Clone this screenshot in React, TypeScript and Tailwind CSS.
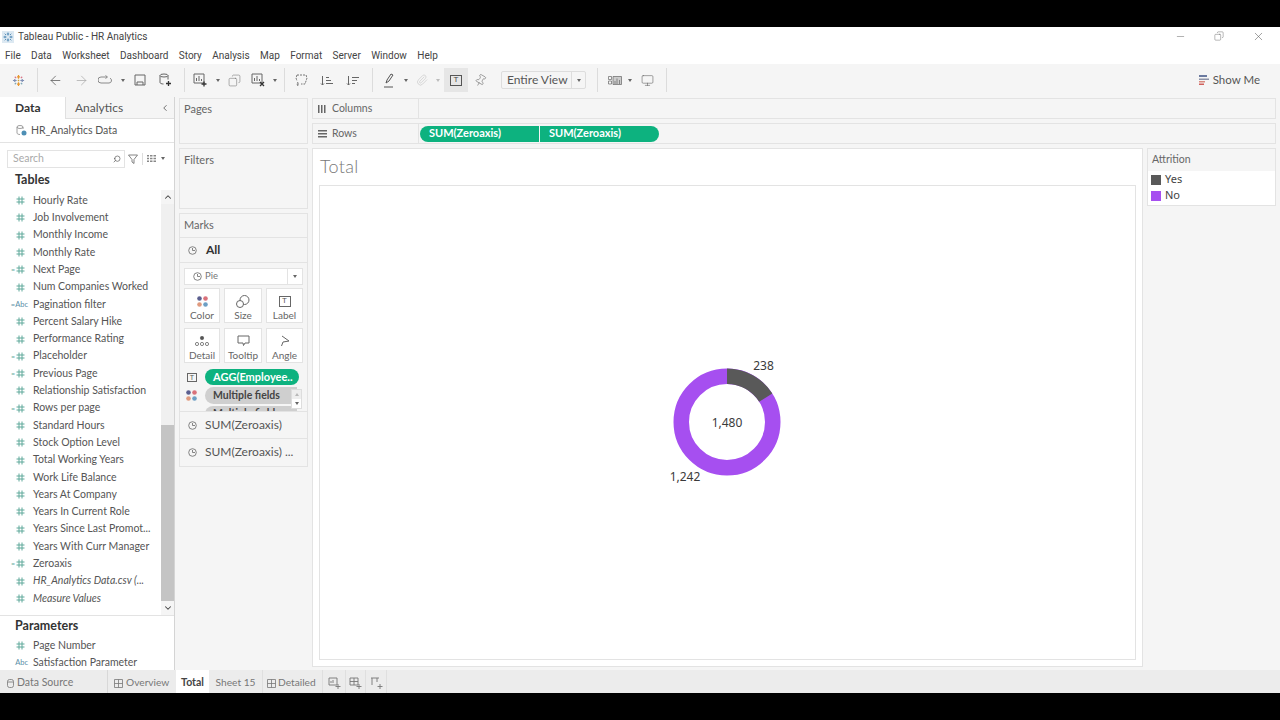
import * as React from "react";
import { ArrowLeft, ArrowRight, ChevronDown, ChevronLeft, ChevronUp, Copy, Minus, Monitor, Paperclip, Pin, Search, X } from "lucide-react";

type Field = { name: string; kind?: "hash" | "calc" | "abc" | "calcAbc"; italic?: boolean };

const FIELDS: Field[] = [
  { name: "Hourly Rate" },
  { name: "Job Involvement" },
  { name: "Monthly Income" },
  { name: "Monthly Rate" },
  { name: "Next Page", kind: "calc" },
  { name: "Num Companies Worked" },
  { name: "Pagination filter", kind: "calcAbc" },
  { name: "Percent Salary Hike" },
  { name: "Performance Rating" },
  { name: "Placeholder", kind: "calc" },
  { name: "Previous Page", kind: "calc" },
  { name: "Relationship Satisfaction" },
  { name: "Rows per page", kind: "calc" },
  { name: "Standard Hours" },
  { name: "Stock Option Level" },
  { name: "Total Working Years" },
  { name: "Work Life Balance" },
  { name: "Years At Company" },
  { name: "Years In Current Role" },
  { name: "Years Since Last Promot..." },
  { name: "Years With Curr Manager" },
  { name: "Zeroaxis", kind: "calc" },
  { name: "HR_Analytics Data.csv (...", italic: true },
  { name: "Measure Values", italic: true },
];

const MENU = ["File", "Data", "Worksheet", "Dashboard", "Story", "Analysis", "Map", "Format", "Server", "Window", "Help"];

function FieldIcon({ kind = "hash" }: { kind?: Field["kind"] }) {
  if (kind === "abc" || kind === "calcAbc") {
    return (
      <span className="flex w-[33px] justify-end pr-[5px] text-[7.5px] leading-none text-[#5b8fa8]">
        {kind === "calcAbc" ? "=Abc" : "Abc"}
      </span>
    );
  }
  return (
    <span className="flex w-[33px] items-center justify-end pr-[8px] text-[#5fa89a]">
      {kind === "calc" && <span className="mr-[1px] text-[7px] leading-none">=</span>}
      <svg width="9" height="9" viewBox="0 0 9 9" fill="none" stroke="currentColor" strokeWidth="1">
        <path d="M3 0.5v8M6 0.5v8M0.5 3h8M0.5 6h8" />
      </svg>
    </span>
  );
}

function FieldRow({ field }: { field: Field }) {
  return (
    <div className="flex h-[17.3px] items-center text-[10.5px] whitespace-nowrap text-[#555]">
      <FieldIcon kind={field.kind} />
      <span className={field.italic ? "italic" : ""}>{field.name}</span>
    </div>
  );
}

function Caret({ className = "" }: { className?: string }) {
  return <span className={"inline-block h-0 w-0 border-x-[2.5px] border-t-[3px] border-x-transparent border-t-[#666] " + className} />;
}

function ToolSep() {
  return <div className="h-[24px] w-px bg-[#dcdcdc]" />;
}

function LogoMark({ size = 14 }: { size?: number }) {
  return (
    <svg width={size} height={size} viewBox="0 0 14 14" fill="none" strokeWidth="1.3">
      <path d="M7 1v4M5.4 3h3.2M7 9v4M5.4 11h3.2" stroke="#e8962d" />
      <path d="M1 7h4M3 5.4v3.2M9 7h4M11 5.4v3.2" stroke="#7f8fb5" />
      <path d="M3 3l1.5 1.5M11 3L9.5 4.5" stroke="#d9768a" />
      <path d="M3 11l1.5-1.5M11 11L9.5 9.5" stroke="#7fa8b8" />
      <path d="M6.2 7h1.6M7 6.2v1.6" stroke="#c9a13c" />
    </svg>
  );
}

function TitleIcon() {
  return (
    <svg width="12" height="12" viewBox="0 0 12 12" fill="none" stroke="#4d87b3" strokeWidth="0.9">
      <rect x="0" y="0" width="12" height="12" fill="#dde9f2" stroke="none" />
      <path d="M6 1.5v3M4.800 3h2.400M6 7.500v3M4.800 9h2.400M1.500 6h3M3 4.800v2.400M7.500 6h3M9 4.800v2.400" />
      <path d="M2.700 2.700l1.300 1.300M9.300 2.700L8 4M2.700 9.300L4 8M9.300 9.300L8 8" />
    </svg>
  );
}

function Toolbar() {
  const ic = "text-[#6e6e6e]";
  return (
    <div className="flex h-[33px] items-center bg-[#f5f5f5] pb-[1px]">
      <div className="flex w-[37px] justify-center"><LogoMark size={13} /></div>
      <ToolSep />
      <div className="flex w-[34px] justify-center"><ArrowLeft size={15} strokeWidth={1.2} className="text-[#555]" /></div>
      <div className="flex w-[18px] justify-center"><ArrowRight size={15} strokeWidth={1.2} className="text-[#aaa]" /></div>
      <div className="flex w-[30px] justify-center">
        <svg width="14" height="10" viewBox="0 0 14 10" fill="none" stroke="#8a8a8a" strokeWidth="1">
          <path d="M9 2H3a2.5 2.5 0 0 0 0 6h8a2.5 2.5 0 0 0 1-4.8M7.5 0.5L9.5 2 7.5 3.5" />
        </svg>
      </div>
      <div className="flex w-[5px] justify-center"><Caret /></div>
      <div className="flex w-[29px] justify-center">
        <svg width="12" height="12" viewBox="0 0 12 12" fill="none" stroke="#666" strokeWidth="1">
          <path d="M1 1h10v10H1zM3 11V8h6v3" />
        </svg>
      </div>
      <div className="flex w-[23px] justify-center">
        <svg width="13" height="14" viewBox="0 0 13 14" fill="none" stroke="#666" strokeWidth="1">
          <ellipse cx="5" cy="2.5" rx="4" ry="1.5" />
          <path d="M1 2.5v7c0 .8 1.5 1.5 3.500 1.500M9 2.500v4" />
          <path d="M9.500 8v5M7 10.500h5" stroke="#333" strokeWidth="1.3" />
        </svg>
      </div>
      <div className="w-[7px]" />
      <ToolSep />
      <div className="flex w-[31px] justify-center">
        <svg width="15" height="14" viewBox="0 0 15 14" fill="none" stroke="#666" strokeWidth="1">
          <path d="M1 1h10v9H1zM3.500 8V5M6 8V3M8.500 8V6" />
          <path d="M11 8.500v5M8.500 11h5" stroke="#333" strokeWidth="1.300" />
        </svg>
      </div>
      <div className="flex w-[3px] justify-center"><Caret /></div>
      <div className="flex w-[31px] justify-center"><Copy size={13} strokeWidth={1} className={ic + " -scale-x-100"} /></div>
      <div className="flex w-[17px] justify-center">
        <svg width="15" height="14" viewBox="0 0 15 14" fill="none" stroke="#666" strokeWidth="1">
          <path d="M1 1h10v9H1zM3.500 8V5M6 8V3M8.500 8V6" />
          <path d="M9 9l4 4M13 9l-4 4" stroke="#333" strokeWidth="1.300" />
        </svg>
      </div>
      <div className="flex w-[16px] justify-center"><Caret /></div>
      <div className="w-[1px]" />
      <ToolSep />
      <div className="flex w-[33px] justify-center">
        <svg width="13" height="14" viewBox="0 0 13 14" fill="none" stroke="#777" strokeWidth="1">
          <path d="M2 2h9l1 3-1 3-1 3H6M2 2L1 5l1 3M4 11l-2 0M3 13l-1-2 1-2" strokeDasharray="2 1" />
        </svg>
      </div>
      <div className="flex w-[18px] justify-center">
        <svg width="14" height="13" viewBox="0 0 14 13" fill="none" stroke="#666" strokeWidth="1">
          <path d="M2.500 2v9M1 9.500l1.500 1.500L4 9.500M6 3.500h3M6 6.500h5M6 9.500h7" />
        </svg>
      </div>
      <div className="flex w-[34px] justify-center">
        <svg width="14" height="13" viewBox="0 0 14 13" fill="none" stroke="#666" strokeWidth="1">
          <path d="M2.500 2v9M1 9.500l1.500 1.500L4 9.500M6 3.500h7M6 6.500h5M6 9.500h3" />
        </svg>
      </div>
      <div className="w-[2px]" />
      <ToolSep />
      <div className="flex w-[32px] justify-center">
        <svg width="12" height="15" viewBox="0 0 12 15" fill="none" stroke="#555" strokeWidth="1">
          <path d="M3 10l1-3 4-6 2 1-4 6-3 2zM1 14h9" />
        </svg>
      </div>
      <div className="flex w-[2px] justify-center"><Caret /></div>
      <div className="flex w-[30px] justify-center"><Paperclip size={12} strokeWidth={1} className="text-[#bbb]" /></div>
      <div className="flex w-[1px] justify-center"><Caret className="opacity-40" /></div>
      <div className="ml-[6px] flex h-[24px] w-[24px] items-center justify-center bg-[#e6e6e6]">
        <span className="flex h-[11px] w-[12px] items-center justify-center border border-[#555] font-['Liberation_Sans'] text-[8px] leading-none text-[#444]">T</span>
      </div>
      <div className="flex w-[24px] justify-center"><Pin size={13} strokeWidth={1} className="rotate-[30deg] text-[#666]" /></div>
      <div className="ml-[9px] flex h-[18px] w-[85px] items-center rounded-[2px] border border-[#ddd] text-[12px] text-[#555]">
        <span className="w-[69px] pl-[5px] leading-none whitespace-nowrap">Entire View</span>
        <span className="flex h-full flex-1 items-center justify-center border-l border-[#ddd]"><Caret /></span>
      </div>
      <div className="w-[11px]" />
      <ToolSep />
      <div className="ml-[2px] flex w-[30px] justify-center">
        <svg width="14" height="9" viewBox="0 0 14 9" fill="#888" stroke="#666" strokeWidth="0.700">
          <path d="M.5.500h3v3h-3zM.5 5h3v3h-3z" fill="none" />
          <path d="M5 .5h8.500v8H5z" fill="#ccc" />
          <path d="M7 8V5M9 8V2.500M11.500 8V4" />
        </svg>
      </div>
      <div className="flex w-0 justify-center"><Caret className="shrink-0" /></div>
      <div className="flex w-[34px] justify-center"><Monitor size={13} strokeWidth={1} className="text-[#555]" /></div>
      <div className="w-[2px]" />
      <ToolSep />
      <div className="ml-auto flex items-center pr-[20px]">
        <svg width="10" height="10" viewBox="0 0 10 10" className="mr-[4px]">
          <path d="M0 0h8v2H0z" fill="#6b7aa0" />
          <path d="M0 3.500h10v1.500H0z" fill="#8d93a8" />
          <path d="M0 6h6v1.500H0z" fill="#d98a7e" />
          <path d="M0 8.500h5V10H0z" fill="#d0605c" />
        </svg>
        <span className="text-[11.5px] leading-none text-[#555]">Show Me</span>
      </div>
    </div>
  );
}

function DataPane() {
  return (
    <div className="flex w-[175px] shrink-0 flex-col border-r border-[#d4d4d4] bg-white">
      <div className="flex h-[22px] shrink-0">
        <div className="flex w-[65px] items-center bg-white pl-[15px] text-[12px] font-bold text-[#333]">Data</div>
        <div className="flex flex-1 items-center justify-between border-b border-l border-[#e0e0e0] bg-[#f5f5f5] pr-[4px] pl-[9px] text-[12px] text-[#555]">
          Analytics
          <ChevronLeft size={10} className="text-[#555]" />
        </div>
      </div>
      <div className="flex h-[24px] shrink-0 items-center border-b border-[#e3e3e3] pl-[16px] text-[10.5px] text-[#555]">
        <svg width="11" height="11" viewBox="0 0 11 11" fill="none" stroke="#888" strokeWidth="0.800" className="mr-[4px]">
          <ellipse cx="4" cy="2" rx="3" ry="1.500" />
          <path d="M1 2v6c0 .8 1.300 1.500 3 1.500M7 2v2" />
          <circle cx="8" cy="8" r="2.500" fill="#4e8fb5" stroke="none" />
        </svg>
        HR_Analytics Data
      </div>
      <div className="flex h-[31px] shrink-0 items-center pl-[7px]">
        <div className="flex h-[18px] w-[118px] items-center justify-between border border-[#e3e3e3] pr-[3px] pl-[5px] text-[10.500px] text-[#aaa]">
          Search
          <Search size={8} className="-scale-x-100 text-[#555]" />
        </div>
        <svg width="10" height="10" viewBox="0 0 10 10" fill="none" stroke="#666" strokeWidth="0.800" className="ml-[3px]">
          <path d="M.5 1h9L6 5.500V9.500L4 8V5.500z" />
        </svg>
        <div className="mx-[4px] h-[12px] w-px bg-[#ddd]" />
        <svg width="9" height="7" viewBox="0 0 9 7" fill="#888"><path d="M0 0h2v1.500H0zM3 0h2.500v1.500H3zM6.500 0H9v1.500H6.500zM0 2.700h2v1.500H0zM3 2.700h2.500v1.500H3zM6.500 2.700H9v1.500H6.500zM0 5.400h2V7H0zM3 5.400h2.500V7H3zM6.500 5.400H9V7H6.500z" /></svg>
        <Caret className="ml-[5px]" />
      </div>
      <div className="flex h-[13px] shrink-0 items-center pl-[15px] text-[12.5px] font-bold text-[#333]">Tables</div>
      <div className="mt-[3px] flex h-[425px] shrink-0">
        <div className="flex-1 overflow-hidden pt-[2px]">
          {FIELDS.map((f) => <FieldRow key={f.name} field={f} />)}
        </div>
        <div className="flex w-[13px] flex-col bg-[#f0f0f0]">
          <div className="flex h-[14px] items-center justify-center bg-[#f5f5f5]"><ChevronUp size={10} strokeWidth={2.500} className="text-[#444]" /></div>
          <div className="mt-[221px] w-full flex-1 bg-[#c4c4c4]" />
          <div className="flex h-[14px] items-center justify-center bg-[#f5f5f5]"><ChevronDown size={10} strokeWidth={2.500} className="text-[#444]" /></div>
        </div>
      </div>
      <div className="flex-1 border-t border-[#e3e3e3]">
        <div className="flex h-[20px] items-center pl-[15px] text-[12.5px] leading-none font-bold text-[#333]">Parameters</div>
        <div className="mt-[1px]">
          <FieldRow field={{ name: "Page Number" }} />
          <FieldRow field={{ name: "Satisfaction Parameter", kind: "abc" }} />
        </div>
      </div>
    </div>
  );
}

function Card({ title, className = "" }: { title: string; className?: string }) {
  return (
    <div className={"border border-[#e3e3e3] bg-[#f5f5f5] " + className}>
      <div className="pl-[4px] text-[11px] text-[#666]">{title}</div>
    </div>
  );
}

function MarkButton({ label, width, icon }: { label: string; width: string; icon: React.ReactNode }) {
  return (
    <div className={"flex h-[35px] flex-col items-center border border-[#e3e3e3] bg-white pt-[4px] " + width}>
      <div className="flex h-[16px] items-center">{icon}</div>
      <span className="text-[10px] leading-[13px] text-[#666]">{label}</span>
    </div>
  );
}

function PieGlyph() {
  return (
    <svg width="9" height="9" viewBox="0 0 9 9" fill="none" stroke="#777" strokeWidth="0.900" className="shrink-0">
      <circle cx="4.500" cy="4.500" r="3.800" />
      <path d="M4.500 2v2.500H7" />
    </svg>
  );
}

function ColorDots() {
  return (
    <svg width="11" height="11" viewBox="0 0 11 11" className="shrink-0">
      <circle cx="2.500" cy="2.500" r="2.300" fill="#5b5f8f" />
      <circle cx="8.500" cy="2.500" r="2.300" fill="#d9717a" />
      <circle cx="2.500" cy="8.500" r="2.300" fill="#e09a7e" />
      <circle cx="8.500" cy="8.500" r="2.300" fill="#6d9fc4" />
    </svg>
  );
}

function MarksCard() {
  const s = { fill: "none", stroke: "#666", strokeWidth: 1 };
  return (
    <div className="h-[254px] border border-[#e3e3e3] bg-[#f5f5f5]">
      <div className="flex h-[23px] items-center pl-[4px] text-[11px] text-[#666]">Marks</div>
      <div className="flex h-[26px] items-center border-y border-[#e3e3e3] pl-[8px]">
        <PieGlyph />
        <span className="ml-[9px] text-[12px] font-bold text-[#333]">All</span>
      </div>
      <div className="mx-[4px] mt-[5px] flex h-[17px] items-center border border-[#e3e3e3] bg-white pl-[8px] text-[9.500px] text-[#777]">
        <PieGlyph />
        <span className="ml-[3px] flex-1">Pie</span>
        <span className="flex h-full w-[15px] items-center justify-center border-l border-[#e3e3e3]"><Caret /></span>
      </div>
      <div className="mx-[4px] mt-[3px] flex justify-between">
        <MarkButton label="Color" width="w-[36px]" icon={<ColorDots />} />
        <MarkButton label="Size" width="w-[38px]" icon={
          <svg width="14" height="13" viewBox="0 0 14 13" {...s}><circle cx="8.500" cy="5" r="4.500" /><circle cx="4" cy="9" r="3.500" fill="#fff" /></svg>
        } />
        <MarkButton label="Label" width="w-[37px]" icon={
          <span className="flex h-[11px] w-[12px] items-center justify-center border border-[#666] font-['Liberation_Sans'] text-[8px] leading-none text-[#555]">T</span>
        } />
      </div>
      <div className="mx-[4px] mt-[5px] flex justify-between">
        <MarkButton label="Detail" width="w-[36px]" icon={
          <svg width="14" height="11" viewBox="0 0 14 11" fill="none" stroke="#666" strokeWidth="0.800">
            <circle cx="7" cy="2" r="1.700" fill="#555" /><circle cx="2" cy="8" r="1.600" /><circle cx="7" cy="8" r="1.600" /><circle cx="12" cy="8" r="1.600" />
          </svg>
        } />
        <MarkButton label="Tooltip" width="w-[38px]" icon={
          <svg width="13" height="12" viewBox="0 0 13 12" {...s}><path d="M1 1h11v7H8L6.500 10.500 6 8H1z" /></svg>
        } />
        <MarkButton label="Angle" width="w-[37px]" icon={
          <svg width="10" height="12" viewBox="0 0 10 12" {...s}><path d="M2 1l7 5-6 1-1.500 4" /></svg>
        } />
      </div>
      <div className="relative mt-[5px] h-[43px] overflow-hidden bg-[#f5f5f5]">
        <div className="flex h-[18px] items-center pl-[7px]">
          <span className="flex h-[9px] w-[10px] items-center justify-center border border-[#666] font-['Liberation_Sans'] text-[7px] leading-none text-[#555]">T</span>
          <span className="ml-[8px] flex h-[16px] w-[94px] items-center rounded-full bg-[#0db27f] pl-[8px] text-[11px] font-bold whitespace-nowrap text-white">AGG(Employee..</span>
        </div>
        <div className="flex h-[19px] items-center pl-[6px]">
          <ColorDots />
          <span className="ml-[8px] flex h-[17px] w-[92px] items-center rounded-l-full bg-[#cfcfcf] pl-[8px] text-[10.5px] font-bold whitespace-nowrap text-[#444]">Multiple fields</span>
        </div>
        <div className="flex h-[18px] items-center pl-[25px]">
          <span className="flex h-[16px] w-[92px] items-center rounded-l-full bg-[#cfcfcf] pl-[8px] text-[10.5px] font-bold whitespace-nowrap text-[#444]">Multiple fields</span>
        </div>
        <div className="absolute top-[21px] right-[5px] flex h-[20px] w-[11px] flex-col border border-[#ddd] bg-[#eee]">
          <div className="flex flex-1 items-center justify-center"><Caret className="rotate-180 opacity-40" /></div>
          <div className="flex flex-1 items-center justify-center bg-white"><Caret className="border-t-[#222]" /></div>
        </div>
      </div>
      {["SUM(Zeroaxis)", "SUM(Zeroaxis) ..."].map((t) => (
        <div key={t} className="flex h-[27px] items-center border-t border-[#e3e3e3] pl-[8px] text-[12px] whitespace-nowrap text-[#555]">
          <PieGlyph />
          <span className="ml-[8px]">{t}</span>
        </div>
      ))}
    </div>
  );
}

function Shelf({ label, icon, children }: { label: string; icon: React.ReactNode; children?: React.ReactNode }) {
  return (
    <div className="flex h-[21px] border border-[#e3e3e3] bg-[#f5f5f5]">
      <div className="flex w-[106px] items-center border-r border-[#e3e3e3] pl-[5px] text-[10.5px] text-[#666]">
        <span className="w-[14px]">{icon}</span>
        {label}
      </div>
      {children}
    </div>
  );
}

function ShelfPill() {
  return <span className="flex h-[16px] items-center bg-[#0db27f] pl-[9px] text-[11px] font-bold text-white">SUM(Zeroaxis)</span>;
}

function Donut() {
  // 238 of 1,480 from 12 o'clock, clockwise
  const a = (238 / 1480) * 2 * Math.PI;
  const r = 45.75;
  const cx = 100;
  const cy = 100;
  const ex = cx + r * Math.sin(a);
  const ey = cy - r * Math.cos(a);
  const font = { fontFamily: "'Noto Sans', sans-serif", fontSize: 12, fill: "#3a3a3a" };
  return (
    <svg width="200" height="200" viewBox="0 0 200 200">
      <circle cx={cx} cy={cy} r={r} fill="none" stroke="#a64ff0" strokeWidth="15.500" />
      <path d={`M${cx} ${cy - r}A${r} ${r} 0 0 1 ${ex} ${ey}`} fill="none" stroke="#595959" strokeWidth="15.500" />
      <text x={cx} y={cy + 4.5} textAnchor="middle" {...font}>1,480</text>
      <text x={136.500} y={47.500} textAnchor="middle" {...font}>238</text>
      <text x={58} y={159} textAnchor="middle" {...font}>1,242</text>
    </svg>
  );
}

function App() {
  return (
    <div className="flex h-[720px] w-[1280px] flex-col overflow-hidden bg-black py-[27px] font-['Lato',sans-serif]">
      <div className="flex h-[18px] shrink-0 items-center bg-white pt-[1px] font-['Roboto',sans-serif] text-[10px] text-[#444]">
        <div className="flex w-[18px] justify-center pr-[2px]"><TitleIcon /></div>
        <span>Tableau Public - HR Analytics</span>
        <div className="ml-auto flex items-center pb-[1px] text-[#555]">
          <Minus size={11} strokeWidth={1} className="mr-[28px]" />
          <Copy size={10} strokeWidth={1} className="mr-[28px] -scale-x-100" />
          <X size={13} strokeWidth={1} className="mr-[15px]" />
        </div>
      </div>
      <div className="flex h-[19px] shrink-0 items-center gap-[10.4px] bg-white pt-[2px] pl-[5px] font-['Roboto',sans-serif] text-[10px] text-[#444]">
        {MENU.map((m) => <span key={m}>{m}</span>)}
      </div>
      <Toolbar />
      <div className="flex min-h-0 flex-1 bg-[#f5f5f5]">
        <DataPane />
        <div className="flex w-[133px] shrink-0 flex-col gap-[4px] pt-[1px] pl-[4px]">
          <Card title="Pages" className="h-[46px] pt-[2px]" />
          <Card title="Filters" className="h-[61px] pt-[3px]" />
          <MarksCard />
        </div>
        <div className="flex min-w-0 flex-1 flex-col pt-[1px] pr-[4px] pl-[4px]">
          <div className="flex flex-col gap-[4px]">
            <Shelf label="Columns" icon={
              <svg width="8" height="8" viewBox="0 0 8 8" fill="#666"><path d="M0 0h1.500v8H0zM3 0h1.500v8H3zM6 0h1.500v8H6z" /></svg>
            } />
            <Shelf label="Rows" icon={
              <svg width="9" height="8" viewBox="0 0 9 8" fill="#666"><path d="M0 0h9v1.500H0zM0 3h9v1.500H0zM0 6h9v1.500H0z" /></svg>
            }>
              <div className="flex items-center gap-px pl-[1px]">
                <div className="overflow-hidden rounded-l-full"><div className="w-[119px]"><ShelfPill /></div></div>
                <div className="overflow-hidden rounded-r-full"><div className="w-[119px] bg-[#0db27f]"><ShelfPill /></div></div>
              </div>
            </Shelf>
          </div>
          <div className="mt-[4px] flex min-h-0 flex-1 gap-[4px] pb-[3px]">
            <div className="flex w-[831px] shrink-0 flex-col border border-[#e3e3e3] bg-white px-[6px] pb-[6px]">
              <div className="flex h-[36px] shrink-0 items-center pb-[2px] pl-[1px] text-[18px] font-light tracking-[0.3px] text-[#777]">Total</div>
              <div className="flex min-h-0 flex-1 items-center justify-center border border-[#e3e3e3] pr-[1px] pb-[1px]">
                <Donut />
              </div>
            </div>
            <div className="h-[58px] flex-1 border border-[#e3e3e3] bg-white">
              <div className="flex h-[22px] items-center bg-[#f5f5f5] pl-[4px] text-[10.5px] text-[#666]">Attrition</div>
              <div className="flex h-[16px] items-center pt-[1px] pl-[3px] font-['Noto_Sans',sans-serif] text-[11px] text-[#444]">
                <span className="mr-[4px] h-[10px] w-[10px] bg-[#595959]" />Yes
              </div>
              <div className="flex h-[16px] items-center pt-[1px] pl-[3px] font-['Noto_Sans',sans-serif] text-[11px] text-[#444]">
                <span className="mr-[4px] h-[10px] w-[10px] bg-[#a64ff0]" />No
              </div>
            </div>
          </div>
        </div>
      </div>
      <div className="flex h-[23px] shrink-0 items-stretch bg-[#ececec] text-[10.2px] text-[#777]">
        <div className="flex w-[108px] items-center border-r border-[#d8d8d8] pt-[3px] pl-[7px] text-[10.5px]">
          <svg width="7" height="9" viewBox="0 0 7 9" fill="none" stroke="#777" strokeWidth="0.800" className="mr-[3px]"><rect x=".5" y=".5" width="6" height="8" rx="2" /><path d="M.5 3h6" /></svg>
          Data Source
        </div>
        <div className="flex w-[68px] items-center pt-[3px] pl-[6px]">
          <svg width="9" height="9" viewBox="0 0 9 9" fill="none" stroke="#777" strokeWidth="0.800" className="mr-[3px]"><path d="M.5.5h8v8h-8zM4.500.5v8M.5 4.500h8" /></svg>
          Overview
        </div>
        <div className="flex w-[33px] items-center justify-center bg-white pt-[3px] text-[10.5px] font-bold text-[#444]">Total</div>
        <div className="flex w-[53px] items-center justify-center pt-[3px]">Sheet 15</div>
        <div className="flex w-[61px] items-center border-x border-[#dfdfdf] pt-[3px] pl-[4px]">
          <svg width="9" height="9" viewBox="0 0 9 9" fill="none" stroke="#777" strokeWidth="0.800" className="mr-[2px]"><path d="M.5.5h8v8h-8zM4.500.5v8M.5 4.500h8" /></svg>
          Detailed
        </div>
        <div className="flex w-[22px] items-center justify-center pt-[3px]">
          <svg width="13" height="12" viewBox="0 0 13 12" fill="none" stroke="#777" strokeWidth="0.900"><path d="M1 1h8v7H1zM3 6V4M5 6V3M10 7v5M7.500 9.500h5" /></svg>
        </div>
        <div className="flex w-[21px] items-center justify-center border-x border-[#dfdfdf] pt-[3px]">
          <svg width="13" height="12" viewBox="0 0 13 12" fill="none" stroke="#777" strokeWidth="0.900"><path d="M1 1h8v7H1zM5 1v7M1 4.500h8M10 7v5M7.500 9.500h5" /></svg>
        </div>
        <div className="flex w-[21px] items-center justify-center border-r border-[#dfdfdf] pt-[3px]">
          <svg width="13" height="12" viewBox="0 0 13 12" fill="none" stroke="#777" strokeWidth="0.900"><path d="M1 1h8M2 1v7M7 1v4M10 7v5M7.500 9.500h5" /></svg>
        </div>
      </div>
    </div>
  );
}

export default App;
